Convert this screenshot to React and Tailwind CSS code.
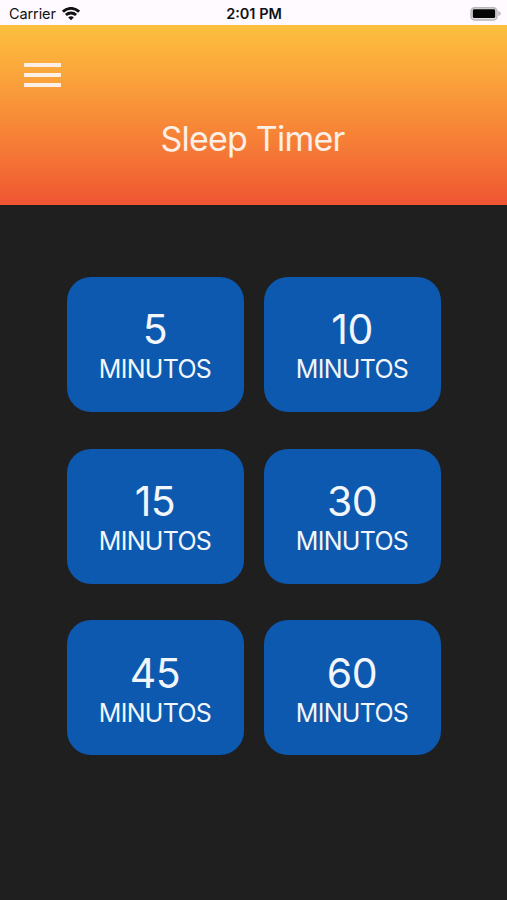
import React from "react";

const TIMERS = [5, 10, 15, 30, 45, 60];

function StatusBar() {
  return (
    <div className="grid h-[25px] shrink-0 grid-cols-3 items-center bg-[#fefaff] pt-[2px] pr-[6px] pl-[9px] text-[#111111]">
      <div className="flex items-center gap-[6px]">
        <span className="pt-px text-[14.5px] leading-none tracking-[-0.1px]">Carrier</span>
        <svg className="h-[14px] w-[18px]" viewBox="0 0 18 14" fill="none" stroke="currentColor" strokeWidth="2.8">
          <path d="M.9 4.7C5.4 .2 12.6 .2 17.1 4.7" />
          <path d="M3.9 8C6.7 5.3 11.3 5.3 14.1 8" />
          <path d="M6.2 10.4C7.8 9 10.2 9 11.8 10.4L9 13.2Z" fill="currentColor" stroke="none" />
        </svg>
      </div>
      <span className="pt-px pr-[2px] text-center text-[14.5px] leading-none font-semibold">2:01 PM</span>
      <div className="flex justify-end">
        <svg className="h-[14px] w-[31px]" viewBox="0 0 31 14">
          <rect x="1" y=".7" width="26" height="12.3" rx="3.8" fill="#e5e1e5" stroke="#b8b5b8" strokeWidth="1.4" />
          <rect x="2.8" y="2.3" width="22.4" height="8.8" rx="1.4" fill="#050505" />
          <path d="M28.3 4C31.5 5 31.5 8 28.3 9Z" fill="#b8b5b8" />
        </svg>
      </div>
    </div>
  );
}

function TimerButton({ minutes }) {
  return (
    <button
      type="button"
      className="flex h-[135px] flex-col items-center rounded-[24px] bg-[#0c59af] pt-[31.4px] pr-px text-[#f2f5fa]"
    >
      <span className="text-[41px] leading-[42px] font-[370] tracking-[-0.5px]">{minutes}</span>
      <span className="mt-[4px] text-[25px] leading-[30px] font-[370] tracking-[-0.7px]">MINUTOS</span>
    </button>
  );
}

export default function App() {
  return (
    <div className="flex h-[900px] w-[507px] flex-col overflow-hidden bg-[#1f1f1f] font-['Inter',sans-serif]">
      <StatusBar />
      <header className="flex h-[180px] shrink-0 flex-col bg-linear-to-b from-[#fcc03e] to-[#ef5432] text-[#fbefe6]">
        <button type="button" aria-label="Menu" className="mt-[38px] ml-[24px] flex w-[37px] flex-col gap-[6px]">
          <span className="h-[4px] w-full bg-current" />
          <span className="h-[4px] w-full bg-current" />
          <span className="h-[4px] w-full bg-current" />
        </button>
        <h1 className="mt-[32px] pr-[2px] text-center text-[34px] leading-[40px] font-[370] tracking-[-0.8px]">Sleep Timer</h1>
      </header>
      <main className="mt-[72px] ml-[67px] grid w-[374px] grid-cols-2 gap-x-[20px] gap-y-[36.7px]">
        {TIMERS.map((minutes) => (
          <TimerButton key={minutes} minutes={minutes} />
        ))}
      </main>
    </div>
  );
}
